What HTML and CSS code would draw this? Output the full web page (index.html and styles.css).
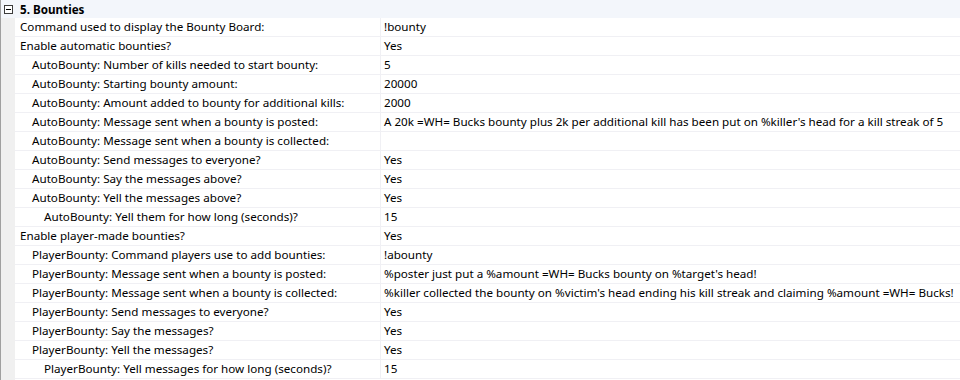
FILE: index.html
```html
<!DOCTYPE html>
<html>
<head>
<meta charset="utf-8">
<link rel="stylesheet" href="styles.css">
</head>
<body>
<div class="grid">
  <div class="gutter"></div>
  <div class="main">
    <div class="cat">
      <span class="toggle"><span class="minus"></span></span>
      <span class="cat-name">5. Bounties</span>
    </div>
    <div class="row"><div class="name l0">Command used to display the Bounty Board:</div><div class="val">!bounty</div></div>
    <div class="row"><div class="name l0">Enable automatic bounties?</div><div class="val">Yes</div></div>
    <div class="row"><div class="name l1">AutoBounty: Number of kills needed to start bounty:</div><div class="val">5</div></div>
    <div class="row"><div class="name l1">AutoBounty: Starting bounty amount:</div><div class="val">20000</div></div>
    <div class="row"><div class="name l1">AutoBounty: Amount added to bounty for additional kills:</div><div class="val">2000</div></div>
    <div class="row"><div class="name l1">AutoBounty: Message sent when a bounty is posted:</div><div class="val">A 20k =WH= Bucks bounty plus 2k per additional kill has been put on %killer's head for a kill streak of 5</div></div>
    <div class="row"><div class="name l1">AutoBounty: Message sent when a bounty is collected:</div><div class="val"></div></div>
    <div class="row"><div class="name l1">AutoBounty: Send messages to everyone?</div><div class="val">Yes</div></div>
    <div class="row"><div class="name l1">AutoBounty: Say the messages above?</div><div class="val">Yes</div></div>
    <div class="row"><div class="name l1">AutoBounty: Yell the messages above?</div><div class="val">Yes</div></div>
    <div class="row"><div class="name l2">AutoBounty: Yell them for how long (seconds)?</div><div class="val">15</div></div>
    <div class="row"><div class="name l0">Enable player-made bounties?</div><div class="val">Yes</div></div>
    <div class="row"><div class="name l1">PlayerBounty: Command players use to add bounties:</div><div class="val">!abounty</div></div>
    <div class="row"><div class="name l1">PlayerBounty: Message sent when a bounty is posted:</div><div class="val">%poster just put a %amount =WH= Bucks bounty on %target's head!</div></div>
    <div class="row"><div class="name l1">PlayerBounty: Message sent when a bounty is collected:</div><div class="val">%killer collected the bounty on %victim's head ending his kill streak and claiming %amount =WH= Bucks!</div></div>
    <div class="row"><div class="name l1">PlayerBounty: Send messages to everyone?</div><div class="val">Yes</div></div>
    <div class="row"><div class="name l1">PlayerBounty: Say the messages?</div><div class="val">Yes</div></div>
    <div class="row"><div class="name l1">PlayerBounty: Yell the messages?</div><div class="val">Yes</div></div>
    <div class="row"><div class="name l2">PlayerBounty: Yell messages for how long (seconds)?</div><div class="val">15</div></div>
  </div>
</div>
</body>
</html>
```
FILE: styles.css
```css
html, body {
  margin: 0;
  padding: 0;
  background: #ffffff;
}
body {
  width: 960px;
  height: 380px;
  overflow: hidden;
  font-family: "Noto Sans", "Open Sans", sans-serif;
  font-size: 11.65px;
  color: #000000;
}
.grid {
  display: flex;
  height: 380px;
  border-left: 1px solid #a0a0a0;
}
.gutter {
  width: 14px;
  flex: none;
  background: #f0f0f0;
}
.main {
  flex: 1;
  display: flex;
  flex-direction: column;
}
.cat {
  height: 18px;
  flex: none;
  display: flex;
  align-items: center;
  background: #f3f6fb;
  margin-left: -14px;
  padding-left: 3px;
}
.toggle {
  width: 9px;
  height: 9px;
  border: 1px solid #3c3c3c;
  box-sizing: border-box;
  display: flex;
  align-items: center;
  justify-content: center;
  background: #ffffff;
}
.minus {
  width: 5px;
  height: 1px;
  background: #000;
}
.cat-name {
  font-weight: bold;
  margin-left: 7px;
}
.row {
  height: 19px;
  flex: none;
  display: flex;
  box-sizing: border-box;
  border-bottom: 1px solid #f0f0f4;
}
.name {
  width: 366px;
  flex: none;
  box-sizing: border-box;
  border-right: 1px solid #f0f0f4;
  line-height: 18px;
  white-space: nowrap;
  overflow: hidden;
}
.l0 { padding-left: 5px; }
.l1 { padding-left: 17px; }
.l2 { padding-left: 29px; }
.val {
  flex: 1;
  padding-left: 3px;
  line-height: 18px;
  white-space: nowrap;
  overflow: hidden;
}
```
